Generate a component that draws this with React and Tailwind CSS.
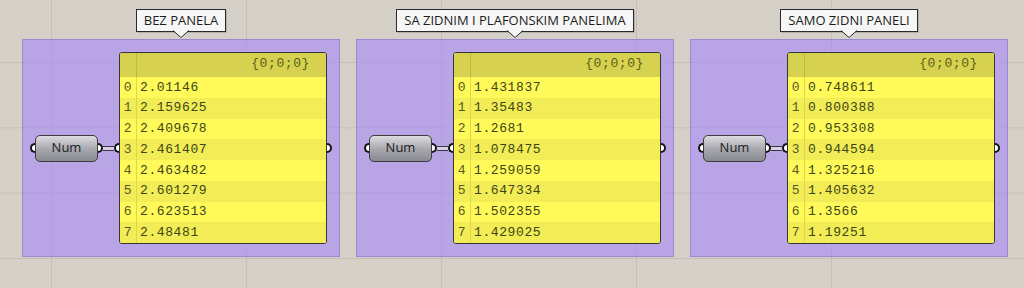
const groups = [
  {
    label: 'BEZ PANELA',
    values: ['2.01146', '2.159625', '2.409678', '2.461407', '2.463482', '2.601279', '2.623513', '2.48481'],
  },
  {
    label: 'SA ZIDNIM I PLAFONSKIM PANELIMA',
    values: ['1.431837', '1.35483', '1.2681', '1.078475', '1.259059', '1.647334', '1.502355', '1.429025'],
  },
  {
    label: 'SAMO ZIDNI PANELI',
    values: ['0.748611', '0.800388', '0.953308', '0.944594', '1.325216', '1.405632', '1.3566', '1.19251'],
  },
];

function Label({ text }) {
  return (
    <div className="relative flex h-[23px] items-center border border-[#2a2a2a] bg-[#f6f6f6] px-[7px] text-[13px] leading-none text-[#1c1c1c] shadow-[1px_1px_0_rgba(0,0,0,0.15)] font-['Open_Sans',sans-serif]">
      {text}
      <svg
        className="absolute left-1/2 top-full -mt-px -translate-x-1/2"
        width="16"
        height="8"
        viewBox="0 0 16 8"
      >
        <polygon points="0,0 16,0 8,8" fill="#f6f6f6" />
        <polyline points="0,0.5 8,7.5 16,0.5" fill="none" stroke="#2a2a2a" strokeWidth="1" />
      </svg>
    </div>
  );
}

function PortIn() {
  return <span className="h-[10px] w-[5px] shrink-0 rounded-l-full border-2 border-r-0 border-[#151515] bg-white" />;
}

function PortOut() {
  return <span className="h-[10px] w-[5px] shrink-0 rounded-r-full border-2 border-l-0 border-[#151515] bg-white" />;
}

function NumParam() {
  return (
    <div className="flex items-center">
      <PortIn />
      <div className="flex h-[27px] w-[63px] items-center justify-center rounded-[5px] border border-[#3c3c3c] bg-gradient-to-b from-[#dcdce0] via-[#a9a9b0] to-[#8a8a92] text-[13px] text-[#1c1c1c] font-['Open_Sans',sans-serif]">
        Num
      </div>
      <PortOut />
    </div>
  );
}

function Panel({ values }) {
  return (
    <div className="relative h-[192px] w-[208px] shrink-0">
      <div className="flex h-full w-full flex-col overflow-hidden rounded-[3px] border border-[#363636] bg-[#fffa5a] font-['Liberation_Mono',monospace] text-[13px] tracking-[0.6px] text-[#3c4614]">
        <div className="flex h-[24px] shrink-0 bg-[#d6d14e]">
          <div className="w-[17px] shrink-0 border-r border-[#bdb744]" />
          <div className="flex flex-1 items-center justify-end pb-[3px] pr-[16px] text-[#56601e]">{'{0;0;0}'}</div>
        </div>
        {values.map((v, i) => (
          <div key={i} className={`flex flex-1 ${i % 2 ? 'bg-[#f2ec57]' : 'bg-[#fffa5a]'}`}>
            <div className="flex w-[17px] shrink-0 items-center justify-center border-r border-[#dcd650] text-[#555a20]">{i}</div>
            <div className="flex flex-1 items-center pl-[3px]">{v}</div>
          </div>
        ))}
      </div>
      <span className="absolute -right-[5px] top-1/2 h-[10px] w-[5px] -translate-y-1/2 rounded-r-full border-2 border-l-0 border-[#151515] bg-white" />
    </div>
  );
}

function Group({ label, values }) {
  return (
    <div className="flex w-[318px] flex-col items-center">
      <Label text={label} />
      <div className="mt-[7px] flex h-[218px] w-full items-center border border-[rgba(110,80,190,0.35)] bg-[rgba(167,135,248,0.6)] pl-[7px]">
        <NumParam />
        <div className="h-[5px] w-[11px] shrink-0 border-y-[1.5px] border-[#3a3a3a] bg-[#d8d0e8]" />
        <PortIn />
        <Panel values={values} />
      </div>
    </div>
  );
}

export default function App() {
  return (
    <div className="flex h-[288px] w-[1024px] gap-[16px] overflow-hidden bg-[#d4d0c8] bg-[linear-gradient(to_right,#c3bfb7_1px,transparent_1px),linear-gradient(to_bottom,#c3bfb7_1px,transparent_1px)] bg-[size:195px_65.33px] bg-[position:51px_62px] pl-[22px] pt-[9px]">
      {groups.map((g) => (
        <Group key={g.label} label={g.label} values={g.values} />
      ))}
    </div>
  );
}
